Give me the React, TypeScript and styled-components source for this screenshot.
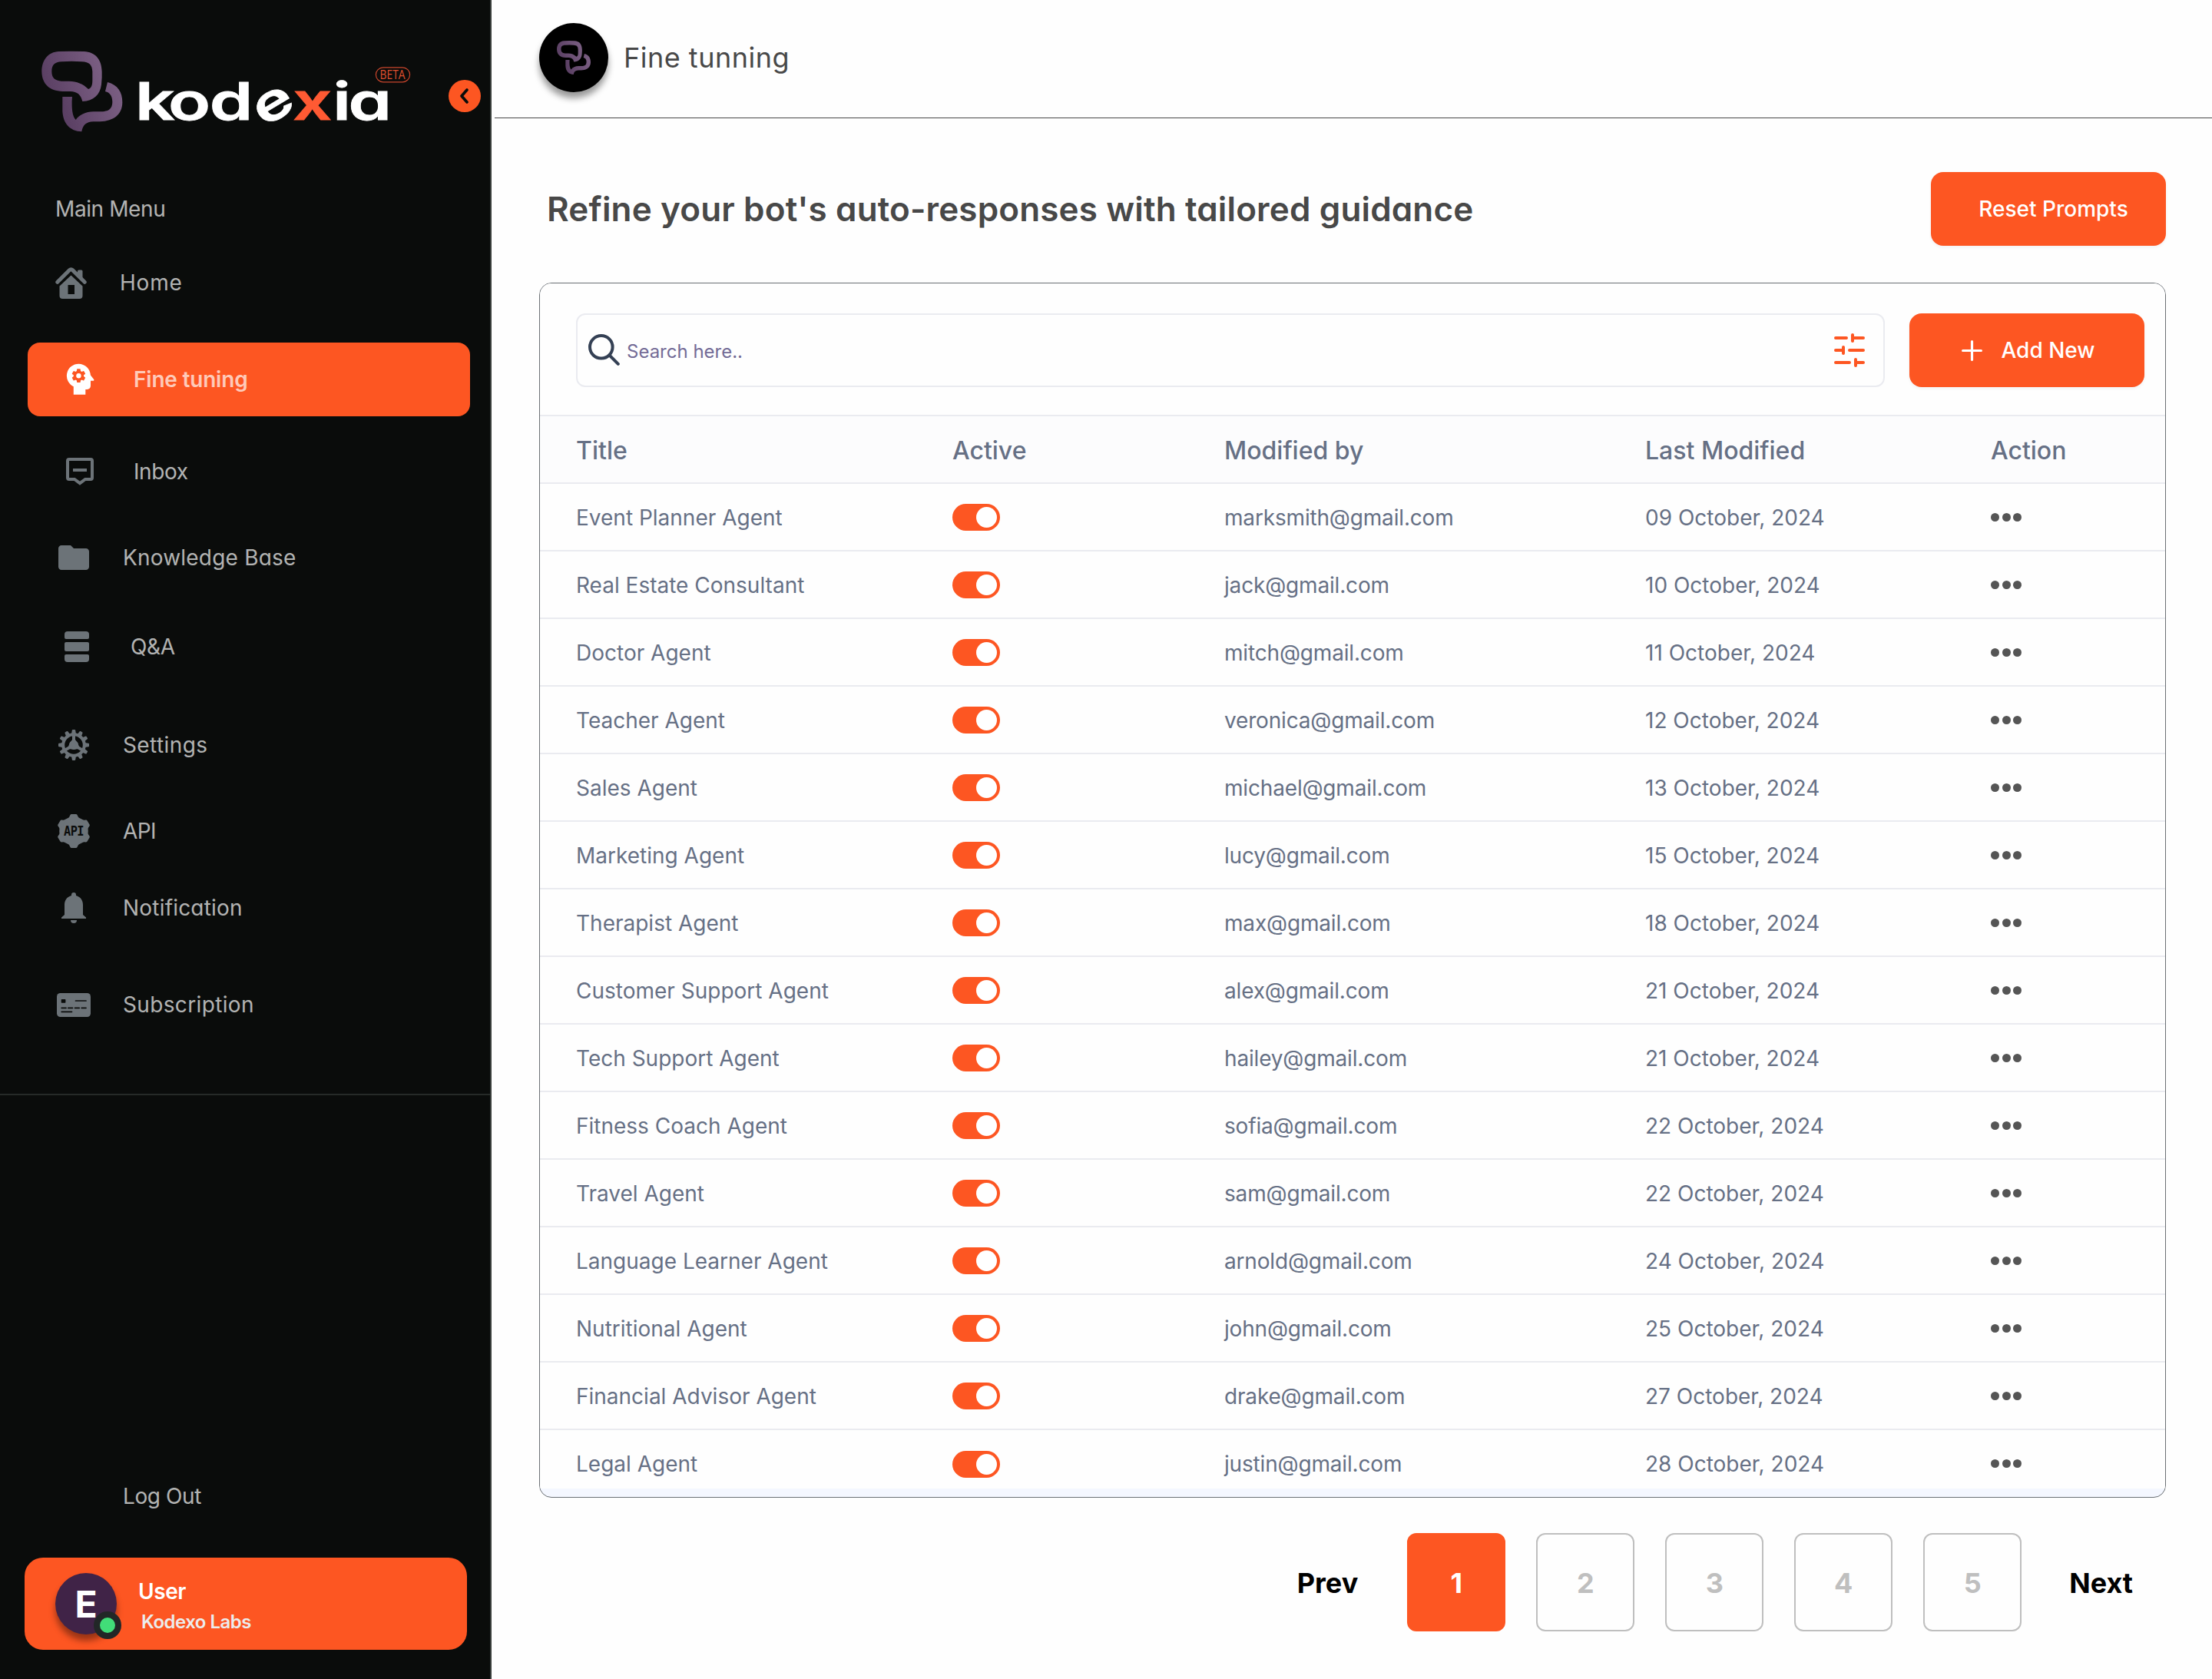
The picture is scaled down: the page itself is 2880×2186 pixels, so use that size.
import React, { useState } from 'react';

import styled, { createGlobalStyle, css } from 'styled-components';
import { MdFolder, MdPsychology } from 'react-icons/md';

const colors = {
    orange: '#fd5622',
    sidebar: '#0a0c0b',
    sidebar_line: '#262a28',
    icon: '#6c7378',
    text_dark: '#484848',
    text_gray: '#667085',
    line: '#eaebf0',
    panel_border: '#6b7074',
    page_border: '#bfbfbf',
};

const GlobalStyle = createGlobalStyle`
    * {
        box-sizing: border-box;
    }

    body {
        margin: 0;
        background-color: #fefefe;
        font-family: Inter, "Liberation Sans", sans-serif;
    }

    button, input {
        font-family: inherit;
    }
`;

// single-storey "a" for the rounder labels
const rounded = css`
    font-feature-settings: "cv11" 1;
`;

const Layout = styled.div`
    display: flex;
    width: 2880px;
    height: 2186px;
    overflow: hidden;
`;

/* ---------- sidebar ---------- */

const Sidebar = styled.aside`
    display: flex;
    flex-direction: column;
    width: 640px;
    flex-shrink: 0;
    background-color: ${colors.sidebar};
    border-right: 2px solid #3a3f3c;
`;

const Brand = styled.div`
    display: flex;
    align-items: flex-start;
    height: 244px;
    padding: 50px 0 0 40px;

    > svg {
        flex-shrink: 0;
    }
`;

const Wordmark = styled.text`
    font-family: Inter, sans-serif;
    font-size: 67px;
    font-weight: 600;
    fill: #fff;
    stroke: #fff;
    stroke-width: 0.8px;
    ${rounded}

    .accent {
        fill: #ff5a33;
        stroke: #ff5a33;
    }
`;

const CollapseButton = styled.button`
    display: flex;
    align-items: center;
    justify-content: center;
    width: 42px;
    height: 42px;
    margin: 54px 0 0 34px;
    padding: 0;
    border: none;
    border-radius: 50%;
    background-color: ${colors.orange};
    cursor: pointer;
`;

const MenuTitle = styled.div`
    height: 56px;
    margin-bottom: 37px;
    padding-left: 72px;
    line-height: 56px;
    font-size: 28px;
    letter-spacing: -0.4px;
    color: rgba(255, 255, 255, 0.7);
`;

const Nav = styled.nav`
    display: flex;
    flex-direction: column;
    height: 1089px;
    border-bottom: 2px solid ${colors.sidebar_line};
`;

const NavItem = styled.a<{ $gap?: number; $indent: number; $slot: number; $spacing?: number; $active?: boolean }>`
    ${rounded}
    display: flex;
    align-items: center;
    flex-shrink: 0;
    height: 60px;
    margin-top: ${p => p.$gap || 0}px;
    padding-left: ${p => p.$indent}px;
    font-size: 28px;
    letter-spacing: ${p => p.$spacing || 0}px;
    color: rgba(255, 255, 255, 0.7);
    cursor: pointer;

    > .icon {
        display: flex;
        width: ${p => p.$slot}px;
        color: ${colors.icon};
    }

    ${p => p.$active && css`
        width: 576px;
        height: 96px;
        margin-left: 36px;
        border-radius: 16px;
        background-color: ${colors.orange};
        font-weight: 600;
        font-feature-settings: normal;

        > .icon {
            color: #fff;
        }
    `}
`;

const LogOut = styled.a`
    height: 60px;
    margin-top: auto;
    padding-left: 160px;
    line-height: 60px;
    font-size: 28px;
    letter-spacing: -0.4px;
    color: rgba(255, 255, 255, 0.7);
    cursor: pointer;
`;

const UserCard = styled.div`
    display: flex;
    align-items: center;
    width: 576px;
    height: 120px;
    margin: 50px 0 38px 32px;
    padding-left: 40px;
    border-radius: 24px;
    background-color: ${colors.orange};
`;

const UserAvatar = styled.div`
    position: relative;
    display: flex;
    align-items: center;
    justify-content: center;
    width: 80px;
    height: 80px;
    border-radius: 50%;
    background-color: #402347;
    box-shadow: 0 8px 8px rgba(0, 0, 0, 0.4);
    font-size: 48px;
    font-weight: 700;
    color: #fff;

    > .status {
        position: absolute;
        right: -6px;
        bottom: -6px;
        width: 36px;
        height: 36px;
        border: 8px solid #222727;
        border-radius: 50%;
        background-color: #41dd78;
    }
`;

const UserInfo = styled.div`
    margin: 8px 0 0 28px;

    > .name {
        line-height: 40px;
        font-size: 28px;
        font-weight: 600;
        letter-spacing: -0.4px;
        color: #fff;
    }

    > .company {
        padding-left: 4px;
        line-height: 40px;
        font-size: 24px;
        font-weight: 600;
        color: #ececec;
        letter-spacing: -0.5px;
    }
`;

/* ---------- main ---------- */

const Main = styled.main`
    flex: 1;
    min-width: 0;
`;

const Header = styled.header`
    display: flex;
    align-items: center;
    height: 154px;
    margin-left: 4px;
    padding: 0 0 3px 58px;
    border-bottom: 1px solid ${colors.text_dark};
`;

const HeaderLogo = styled.div`
    display: flex;
    align-items: center;
    justify-content: center;
    width: 90px;
    height: 90px;
    border-radius: 50%;
    background-color: #000;
    box-shadow: 0 8px 8px rgba(0, 0, 0, 0.4);
`;

const HeaderTitle = styled.div`
    ${rounded}
    margin-left: 20px;
    font-size: 36px;
    letter-spacing: 0.5px;
    color: ${colors.text_dark};
`;

const TitleRow = styled.div`
    display: flex;
    align-items: center;
    justify-content: space-between;
    height: 96px;
    margin: 70px 60px 48px 72px;
`;

const Title = styled.h1`
    ${rounded}
    margin: 0;
    font-size: 44px;
    font-weight: 600;
    letter-spacing: 0.14px;
    color: ${colors.text_dark};
    white-space: nowrap;
`;

const PrimaryButton = styled.button<{ $shift?: number }>`
    display: flex;
    align-items: center;
    justify-content: center;
    gap: 24px;
    width: 306px;
    height: 96px;
    padding: 0 0 0 ${p => p.$shift || 0}px;
    border: none;
    border-radius: 16px;
    background-color: ${colors.orange};
    box-shadow: 0 2px 4px rgba(16, 24, 40, 0.05);
    font-size: 28px;
    font-weight: 500;
    color: #fff;
    cursor: pointer;
`;

const Panel = styled.section`
    width: 2118px;
    height: 1582px;
    margin-left: 62px;
    border: 1px solid ${colors.panel_border};
    border-radius: 16px;
    overflow: hidden;
    background-color: #f4f7ff;
`;

const Toolbar = styled.div`
    display: flex;
    align-items: flex-start;
    justify-content: space-between;
    height: 171px;
    padding: 39px 27px 0 47px;
    background-color: #fefefe;
`;

const SearchBox = styled.div`
    display: flex;
    align-items: center;
    width: 1704px;
    height: 96px;
    padding: 0 24px 0 14px;
    border: 2px solid ${colors.line};
    border-radius: 12px;

    > input {
        flex: 1;
        margin: 2px 0 0 9px;
        padding: 0;
        border: none;
        outline: none;
        background: transparent;
        font-size: 24px;
        color: #736b96;

        &::placeholder {
            color: #736b96;
            opacity: 1;
        }
    }
`;

const Row = styled.div<{ $header?: boolean }>`
    display: grid;
    grid-template-columns: 490px 354px 548px 450px 1fr;
    align-items: center;
    height: 88px;
    padding: 2px 0 0 47px;
    border-top: 2px solid ${colors.line};
    background-color: #fefefe;
    font-size: 28px;
    color: ${colors.text_gray};

    > .email {
        letter-spacing: -0.17px;
    }

    &:last-child {
        height: 78px;
        padding-top: 27px;
        align-items: flex-start;
    }

    ${p => p.$header && css`
        padding-top: 3px;
        background-color: #fcfcfd;
        font-size: 32px;
        font-weight: 500;
    `}
`;

const Switch = styled.button<{ $on: boolean }>`
    display: flex;
    align-items: center;
    justify-content: ${p => p.$on ? 'flex-end' : 'flex-start'};
    width: 62px;
    height: 35px;
    margin: 0 0 1px;
    padding: 0 4px;
    border: none;
    border-radius: 18px;
    background-color: ${p => p.$on ? colors.orange : '#d0d5dd'};
    cursor: pointer;

    > .knob {
        width: 27px;
        height: 27px;
        border-radius: 50%;
        background-color: #fff;
    }
`;

const Dots = styled.div`
    display: flex;
    align-items: center;
    gap: 3.7px;
    height: 33px;
    margin-bottom: 1px;
    cursor: pointer;

    > span {
        width: 11px;
        height: 11px;
        border-radius: 50%;
        background-color: #555;
    }
`;

const Pagination = styled.div`
    display: flex;
    align-items: center;
    justify-content: flex-end;
    gap: 40px;
    margin-top: 46px;
    padding-right: 103px;
`;

const PageLink = styled.a`
    margin: 0 24px;
    padding-top: 2px;
    font-size: 36px;
    font-weight: 700;
    color: #000;
    cursor: pointer;

    &:last-child {
        margin: 0 0 0 22px;
    }
`;

const PageButton = styled.button<{ $active: boolean }>`
    width: 128px;
    height: 128px;
    padding: 2px 0 0;
    border: 2px solid ${p => p.$active ? colors.orange : colors.page_border};
    border-radius: 12px;
    background-color: ${p => p.$active ? colors.orange : 'transparent'};
    font-size: 36px;
    font-weight: 700;
    color: ${p => p.$active ? '#fff' : colors.page_border};
    cursor: pointer;
`;

/* ---------- drawings ---------- */

const MarkShape = ({ id }: { id: string }) => <>
    <defs>
        <linearGradient id={id} x1="0" y1="0.4" x2="1" y2="0.2">
            <stop offset="0" stopColor="#5b4064" />
            <stop offset="1" stopColor="#7b5f83" />
        </linearGradient>
    </defs>
    <path
        fill={`url(#${id})`}
        fillRule="evenodd"
        d="M110 51Q155 49 208 51C253 53 277 82 278 130Q279 152 276 180C271 220 246 244 202 246C196 220 182 208 155 207H125C72 206 44 177 43 130C43 84 68 53 110 51ZM120 91Q160 88 200 91C229 92 240 104 241 130V165C241 184 236 195 225 198C205 177 180 168 150 167Q135 168 120 167C94 165 82 154 82 130C82 103 94 92 120 91Z"
    />
    <path
        fill={`url(#${id})`}
        d="M124 228H162Q160 248 161 265C162 290 166 308 176 318C190 298 215 287 245 286C290 286 318 288 319 248C319 225 309 211 291 207L300 171C340 181 358 210 358 250C357 298 325 323 270 325H245C215 326 203 340 199 364C152 362 127 332 124 285Z"
    />
</>;

// the "e" leans, so it gets its own transform between the two upright runs
const KodexiaLogo = () => <svg width="510" height="136" viewBox="40 50 510 136">
    <g transform="translate(40 50) scale(0.3333)">
        <MarkShape id="brand-mark" />
    </g>
    <g>
        <Wordmark transform="scale(1.35 1)" x="130.4 162.2 202" y="156.3">kod</Wordmark>
        <Wordmark transform="translate(356.5 137.5) rotate(-31) scale(1.3 1)" x="-20" y="18">e</Wordmark>
        <Wordmark transform="scale(1.35 1)" x="282.2 320.9 336" y="156.3"><tspan className="accent">x</tspan>ia</Wordmark>
    </g>
    <rect x="489.4" y="87.8" width="44.2" height="19" rx="9.5" fill="none" stroke="#c9452c" strokeWidth="1.2" />
    <text x="494.6" y="102.8" fontFamily="Open Sans" fontSize="15.5" textLength="33" lengthAdjust="spacingAndGlyphs" fill="#e0502f">BETA</text>
</svg>;

const HomeIcon = () => <svg width="41" height="41" viewBox="0 0 41 41" fill="currentColor">
    <path d="M2.8 19.3L18.6 3.6a2.7 2.7 0 0 1 3.8 0L38.2 19.3" fill="none" stroke="currentColor" strokeWidth="5" strokeLinecap="round" />
    <path d="M29 5a1.5 1.5 0 0 1 1.5-1.5h3.5a1.5 1.5 0 0 1 1.5 1.5v11l-6.5-6.5z" />
    <path fillRule="evenodd" d="M20.5 10.5L35.5 24.5V37a4 4 0 0 1-4 4H9.5a4 4 0 0 1-4-4V24.5ZM16.5 23v12h8.5V23Z" />
</svg>;

const InboxIcon = () => <svg width="36" height="36" viewBox="0 0 36 36" fill="none" stroke="currentColor" strokeWidth="4">
    <path d="M4 2H32a2 2 0 0 1 2 2V26a2 2 0 0 1-2 2H25L18 33.2L11 28H4a2 2 0 0 1-2-2V4a2 2 0 0 1 2-2Z" />
    <path d="M9 16H27" />
</svg>;

const StackIcon = () => <svg width="32" height="40" viewBox="0 0 32 40" fill="currentColor">
    <path d="M0 10V4a4 4 0 0 1 4-4H28a4 4 0 0 1 4 4V8a2 2 0 0 1-2 2H2a2 2 0 0 1-2-2Z" />
    <rect y="14" width="32" height="12" rx="2" />
    <path d="M2 30H30a2 2 0 0 1 2 2V36a4 4 0 0 1-4 4H4a4 4 0 0 1-4-4V32a2 2 0 0 1 2-2Z" />
</svg>;

const GearIcon = () => <svg width="40" height="40" viewBox="-20 -20 40 40" fill="currentColor">
    {[...Array(12)].map((_, i) => <path key={i} d="M-3 -14L-2.2 -19.2Q-2 -20 -1.2 -20H1.2Q2 -20 2.2 -19.2L3 -14Z" transform={`rotate(${i * 30})`} />)}
    <circle r="13.8" fill="none" stroke="currentColor" strokeWidth="4" />
    <circle r="6" />
    {[0, 120, 240].map(a => <path key={a} d="M-5.5 -2L-2 -7V-13H2V-7L5.5 -2Z" transform={`rotate(${a})`} />)}
</svg>;

const ApiIcon = () => <svg width="42" height="44" viewBox="-21 -22 42 44" fill="currentColor">
    <path d="M0 -19.5L17 -11Q18.5 0 17 11L0 19.5L-17 11Q-18.5 0 -17 -11Z" stroke="currentColor" strokeWidth="2" strokeLinejoin="round" />
    {[0, 60, 120, 180, 240, 300].map(a => <path key={a} d="M-7 -16L-4.5 -21Q-4 -22 -3 -22H3Q4 -22 4.5 -21L7 -16Z" transform={`rotate(${a})`} />)}
    <text x="-13" y="6.4" fontFamily="DejaVu Sans Mono" fontWeight="700" fontSize="17.4" textLength="26" lengthAdjust="spacingAndGlyphs" fill={colors.sidebar}>API</text>
</svg>;

const BellIcon = () => <svg width="32" height="40" viewBox="0 0 32 40" fill="currentColor">
    <path d="M0 34V32.5L4 29V16C4 10 7.5 5.5 13 4V3A3 3 0 0 1 19 3V4C24.5 5.5 28 10 28 16V29L32 32.5V34Z" />
    <path d="M12 36H20A4 4 0 0 1 12 36Z" />
</svg>;

const CardIcon = () => <svg width="44" height="31" viewBox="0 0 44 31">
    <rect width="44" height="31" rx="4.5" fill="currentColor" />
    <rect x="5.7" y="8" width="5.7" height="4.8" rx="0.8" fill={colors.sidebar} />
    <path d="M24.5 10H38M6.2 19.3H12M14.8 19.3H20.5M23.5 19.3H29.2M32.2 19.3H38M6.2 24.3H19.5" stroke={colors.sidebar} strokeWidth="1.7" strokeLinecap="round" />
</svg>;

const SearchIcon = () => <svg width="41" height="43" viewBox="0 0 41 43" fill="none" stroke="#344054" strokeWidth="4" strokeLinecap="round">
    <circle cx="16.8" cy="16.8" r="14.8" />
    <path d="M27.5 27.5L38.8 38.8" />
</svg>;

const FilterIcon = () => <svg width="40" height="44" viewBox="0 0 40 44" stroke={colors.orange} strokeWidth="4" strokeLinecap="round">
    <path d="M2 6H16M24 2V10M24 6H38M2 22H12M12 18V26M20 22H38M2 38H20M28 34V42M28 38H38" />
</svg>;

/* ---------- data ---------- */

const menu = [
    { name: 'Home', icon: <HomeIcon />, indent: 72, slot: 84, gap: 1, spacing: 0.8 },
    { name: 'Fine tuning', icon: <MdPsychology size={53.3} style={{ transform: 'scaleX(-1)', marginLeft: -8 }} />, indent: 50, slot: 88, gap: 48, spacing: -0.2, active: true },
    { name: 'Inbox', icon: <InboxIcon />, indent: 86, slot: 88, gap: 42, spacing: -0.4 },
    { name: 'Knowledge Base', icon: <MdFolder size={48} style={{ marginLeft: -4 }} />, indent: 76, slot: 84, gap: 52, spacing: 0.2 },
    { name: 'Q&A', icon: <StackIcon />, indent: 84, slot: 86, gap: 56, spacing: -0.3 },
    { name: 'Settings', icon: <GearIcon />, indent: 76, slot: 84, gap: 68, spacing: 0.4 },
    { name: 'API', icon: <ApiIcon />, indent: 75, slot: 85, gap: 52, spacing: -0.6 },
    { name: 'Notification', icon: <BellIcon />, indent: 80, slot: 80, gap: 40, spacing: 0.2 },
    { name: 'Subscription', icon: <CardIcon />, indent: 74, slot: 86, gap: 66, spacing: 0.35 },
];

const initialAgents = [
    ['Event Planner Agent', 'marksmith@gmail.com', '09 October, 2024'],
    ['Real Estate Consultant', 'jack@gmail.com', '10 October, 2024'],
    ['Doctor Agent', 'mitch@gmail.com', '11 October, 2024'],
    ['Teacher Agent', 'veronica@gmail.com', '12 October, 2024'],
    ['Sales Agent', 'michael@gmail.com', '13 October, 2024'],
    ['Marketing Agent', 'lucy@gmail.com', '15 October, 2024'],
    ['Therapist Agent', 'max@gmail.com', '18 October, 2024'],
    ['Customer Support Agent', 'alex@gmail.com', '21 October, 2024'],
    ['Tech Support Agent', 'hailey@gmail.com', '21 October, 2024'],
    ['Fitness Coach Agent', 'sofia@gmail.com', '22 October, 2024'],
    ['Travel Agent', 'sam@gmail.com', '22 October, 2024'],
    ['Language Learner Agent', 'arnold@gmail.com', '24 October, 2024'],
    ['Nutritional Agent', 'john@gmail.com', '25 October, 2024'],
    ['Financial Advisor Agent', 'drake@gmail.com', '27 October, 2024'],
    ['Legal Agent', 'justin@gmail.com', '28 October, 2024'],
].map(([title, email, date]) => ({ title, email, date, active: true }));

const App = () => {

    const [agents, setAgents] = useState(initialAgents);
    const [page, setPage] = useState(1);

    const toggleAgent = (title: string) =>
        setAgents(agents.map(a => a.title === title ? { ...a, active: !a.active } : a));

    return <Layout>
        <GlobalStyle />
        <Sidebar>
            <Brand>
                <KodexiaLogo />
                <CollapseButton aria-label="Collapse">
                    <svg width="12" height="20" viewBox="0 0 12 20" fill="none" stroke={colors.sidebar} strokeWidth="3.6" strokeLinecap="round" strokeLinejoin="round">
                        <path d="M9 2L2 10L9 18" />
                    </svg>
                </CollapseButton>
            </Brand>
            <MenuTitle>Main Menu</MenuTitle>
            <Nav>
                {menu.map((item: any) => (
                    <NavItem key={item.name} $gap={item.gap} $indent={item.indent} $slot={item.slot} $spacing={item.spacing} $active={item.active}>
                        <div className="icon">{item.icon}</div>
                        {item.name}
                    </NavItem>
                ))}
            </Nav>
            <LogOut>Log Out</LogOut>
            <UserCard>
                <UserAvatar>E<div className="status" /></UserAvatar>
                <UserInfo>
                    <div className="name">User</div>
                    <div className="company">Kodexo Labs</div>
                </UserInfo>
            </UserCard>
        </Sidebar>
        <Main>
            <Header>
                <HeaderLogo>
                    <svg width="44" height="44" viewBox="43 50 315 314"><MarkShape id="header-mark" /></svg>
                </HeaderLogo>
                <HeaderTitle>Fine tunning</HeaderTitle>
            </Header>
            <TitleRow>
                <Title>Refine your bot's auto-responses with tailored guidance</Title>
                <PrimaryButton $shift={13}>Reset Prompts</PrimaryButton>
            </TitleRow>
            <Panel>
                <Toolbar>
                    <SearchBox>
                        <SearchIcon />
                        <input placeholder="Search here.." />
                        <FilterIcon />
                    </SearchBox>
                    <PrimaryButton $shift={4}>
                        <svg width="27" height="27" viewBox="0 0 27 27" stroke="#fff" strokeWidth="3.2" strokeLinecap="round">
                            <path d="M13.5 1.6V25.4M1.6 13.5H25.4" />
                        </svg>
                        Add New
                    </PrimaryButton>
                </Toolbar>
                <Row $header>
                    <div>Title</div>
                    <div>Active</div>
                    <div>Modified by</div>
                    <div>Last Modified</div>
                    <div>Action</div>
                </Row>
                {agents.map(agent => (
                    <Row key={agent.title}>
                        <div>{agent.title}</div>
                        <Switch $on={agent.active} onClick={() => toggleAgent(agent.title)}><div className="knob" /></Switch>
                        <div className="email">{agent.email}</div>
                        <div>{agent.date}</div>
                        <Dots><span /><span /><span /></Dots>
                    </Row>
                ))}
            </Panel>
            <Pagination>
                <PageLink>Prev</PageLink>
                {[1, 2, 3, 4, 5].map(n => (
                    <PageButton key={n} $active={n === page} onClick={() => setPage(n)}>{n}</PageButton>
                ))}
                <PageLink>Next</PageLink>
            </Pagination>
        </Main>
    </Layout>;
}

export default App;
